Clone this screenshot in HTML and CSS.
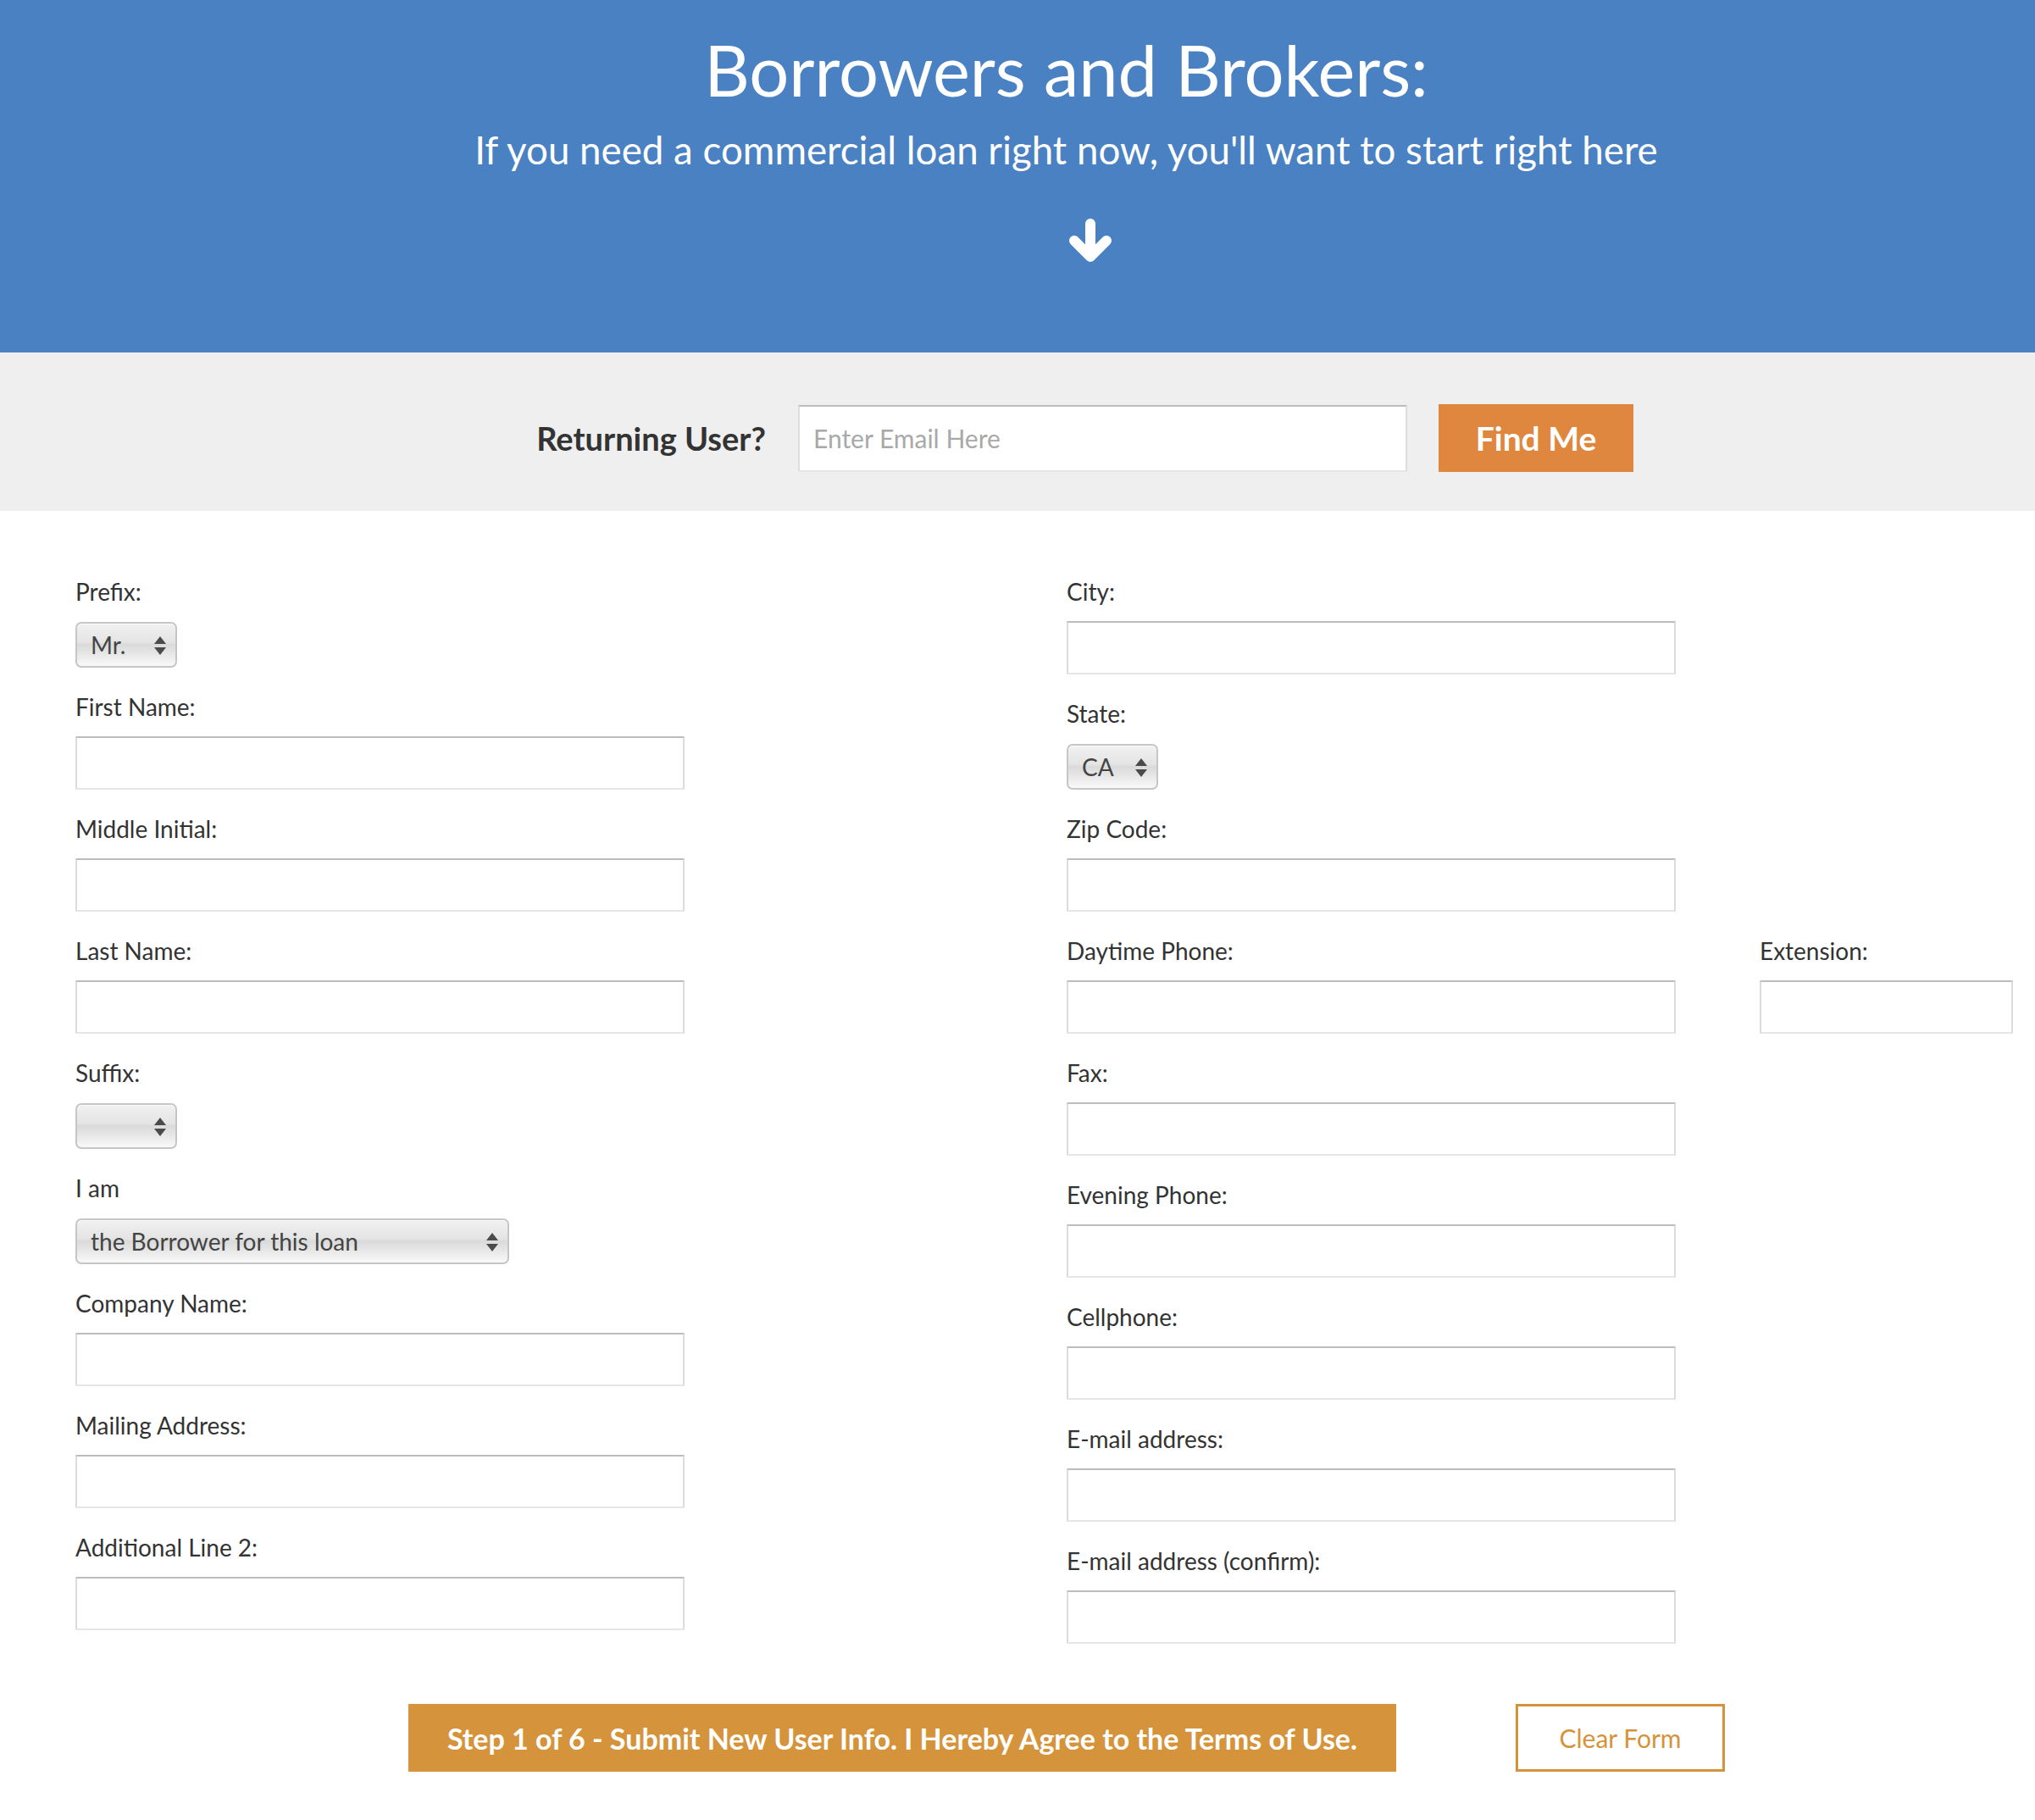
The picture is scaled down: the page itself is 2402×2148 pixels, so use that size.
FILE: index.html
```html
<!DOCTYPE html>
<html lang="en">
<head>
<meta charset="utf-8">
<title>Borrowers and Brokers</title>
<link rel="stylesheet" href="styles.css">
</head>
<body>
<header class="hero">
  <h1 class="hero-title">Borrowers and Brokers:</h1>
  <p class="hero-sub">If you need a commercial loan right now, you'll want to start right here</p>
  <div class="hero-arrow">
    <svg width="52" height="52" viewBox="0 0 52 52" aria-hidden="true">
      <g fill="none" stroke="#fff" stroke-width="12" stroke-linecap="round" stroke-linejoin="round">
        <line x1="26" y1="6" x2="26" y2="42"/>
        <polyline points="7,26 26,45 45,26"/>
      </g>
    </svg>
  </div>
</header>

<section class="returning">
  <label class="returning-label" for="findEmail">Returning User?</label>
  <input class="returning-input" id="findEmail" type="text" placeholder="Enter Email Here">
  <button class="btn-find" type="button">Find Me</button>
</section>

<form class="form">
  <div class="col col-left">
    <div class="group group-select">
      <label class="lbl">Prefix:</label>
      <div class="sel sel-prefix"><select><option>Mr.</option></select><svg class="sel-arrows" width="14" height="22" viewBox="0 0 14 22"><polygon points="0,9 7,0 14,9"/><polygon points="0,13 14,13 7,22"/></svg></div>
    </div>
    <div class="group"><label class="lbl">First Name:</label><input class="txt" type="text"></div>
    <div class="group"><label class="lbl">Middle Initial:</label><input class="txt" type="text"></div>
    <div class="group"><label class="lbl">Last Name:</label><input class="txt" type="text"></div>
    <div class="group group-select">
      <label class="lbl">Suffix:</label>
      <div class="sel sel-suffix"><select><option></option></select><svg class="sel-arrows" width="14" height="22" viewBox="0 0 14 22"><polygon points="0,9 7,0 14,9"/><polygon points="0,13 14,13 7,22"/></svg></div>
    </div>
    <div class="group group-select">
      <label class="lbl">I am</label>
      <div class="sel sel-iam"><select><option>the Borrower for this loan</option></select><svg class="sel-arrows" width="14" height="22" viewBox="0 0 14 22"><polygon points="0,9 7,0 14,9"/><polygon points="0,13 14,13 7,22"/></svg></div>
    </div>
    <div class="group"><label class="lbl">Company Name:</label><input class="txt" type="text"></div>
    <div class="group"><label class="lbl">Mailing Address:</label><input class="txt" type="text"></div>
    <div class="group"><label class="lbl">Additional Line 2:</label><input class="txt" type="text"></div>
  </div>

  <div class="col col-right">
    <div class="group"><label class="lbl">City:</label><input class="txt" type="text"></div>
    <div class="group group-select">
      <label class="lbl">State:</label>
      <div class="sel sel-state"><select><option>CA</option></select><svg class="sel-arrows" width="14" height="22" viewBox="0 0 14 22"><polygon points="0,9 7,0 14,9"/><polygon points="0,13 14,13 7,22"/></svg></div>
    </div>
    <div class="group"><label class="lbl">Zip Code:</label><input class="txt" type="text"></div>
    <div class="pair">
      <div class="group"><label class="lbl">Daytime Phone:</label><input class="txt" type="text"></div>
      <div class="group"><label class="lbl">Extension:</label><input class="txt txt-ext" type="text"></div>
    </div>
    <div class="group"><label class="lbl">Fax:</label><input class="txt" type="text"></div>
    <div class="group"><label class="lbl">Evening Phone:</label><input class="txt" type="text"></div>
    <div class="group"><label class="lbl">Cellphone:</label><input class="txt" type="text"></div>
    <div class="group"><label class="lbl">E-mail address:</label><input class="txt" type="text"></div>
    <div class="group"><label class="lbl">E-mail address (confirm):</label><input class="txt" type="text"></div>
  </div>
</form>

<div class="actions">
  <button class="btn-submit" type="button">Step 1 of 6 - Submit New User Info. I Hereby Agree to the Terms of Use.</button>
  <button class="btn-clear" type="button">Clear Form</button>
</div>
</body>
</html>
```

FILE: styles.css
```css
* { box-sizing: border-box; }

html, body {
  margin: 0;
  padding: 0;
  background: #ffffff;
  font-family: "Lato", "Open Sans", "Liberation Sans", sans-serif;
  color: #333333;
}

/* ---------- hero ---------- */
.hero {
  background: #4a81c2;
  color: #ffffff;
  text-align: center;
  padding: 33px 0 106px 115px;
}

.hero-title {
  margin: 0;
  font-size: 83px;
  line-height: 98px;
  font-weight: 400;
}

.hero-sub {
  margin: 19px 0 0;
  font-size: 45.7px;
  line-height: 54px;
  font-weight: 400;
}

.hero-arrow {
  margin-top: 54px;
  height: 52px;
  display: flex;
  justify-content: center;
  padding-left: 57px;
}

.hero-arrow svg { display: block; }

/* ---------- returning user ---------- */
.returning {
  background: #efefef;
  display: flex;
  align-items: center;
  justify-content: center;
  padding: 61px 0 46px 157px;
  gap: 38px;
}

.returning-label {
  width: 273px;
  text-align: right;
  white-space: nowrap;
  font-size: 38px;
  font-weight: 700;
  color: #333333;
}

.returning-input {
  width: 719px;
  height: 79px;
  margin-right: -1px;
  border: 2px solid #dddddd;
  border-top-color: #bdbdbd;
  border-bottom-color: #e6e6e6;
  background: #ffffff;
  padding: 0 16px;
  font-family: inherit;
  font-size: 30px;
  color: #333333;
  outline: none;
}

.returning-input::placeholder { color: #a9a9a9; }

.btn-find {
  width: 230px;
  height: 80px;
  border: 0;
  background: #e0873f;
  color: #ffffff;
  font-family: inherit;
  font-size: 39px;
  font-weight: 700;
  padding: 0;
  cursor: pointer;
}

/* ---------- form ---------- */
.form {
  display: flex;
  align-items: flex-start;
  padding: 78px 0 0 89px;
  gap: 451px;
}

.col {
  display: flex;
  flex-direction: column;
}

.col-left { width: 719px; }
.col-right { width: 1119px; }

.group {
  display: flex;
  flex-direction: column;
  align-items: flex-start;
  margin-bottom: 29px;
}

.lbl {
  display: block;
  font-size: 28px;
  line-height: 34px;
  margin-bottom: 18px;
  color: #333333;
  white-space: nowrap;
}

.txt {
  width: 719px;
  height: 63px;
  border: 2px solid #dcdcdc;
  border-top-color: #bdbdbd;
  border-bottom-color: #e6e6e6;
  background: #ffffff;
  padding: 0 14px;
  font-family: inherit;
  font-size: 28px;
  outline: none;
}

.txt-ext { width: 299px; }

.pair {
  display: flex;
  gap: 99px;
}

/* custom select look */
.sel {
  position: relative;
  height: 54px;
  border: 2px solid #c6c6c6;
  border-radius: 7px;
  background: linear-gradient(#f1f1f1 0%, #e4e4e4 44%, #dadada 50%, #e6e6e6 70%, #f9f9f9 100%);
  box-shadow: inset 0 1px 0 rgba(255,255,255,0.8);
}

.group-select .lbl { margin-bottom: 19px; }
.group-select { margin-bottom: 29px; }

.sel select {
  -webkit-appearance: none;
  appearance: none;
  width: 100%;
  height: 100%;
  border: 0;
  background: transparent;
  padding: 0 0 0 16px;
  font-family: inherit;
  font-size: 28px;
  color: #444444;
  outline: none;
}

.sel-arrows {
  position: absolute;
  right: 11px;
  top: 50%;
  margin-top: -10px;
  fill: #4a4a4a;
  pointer-events: none;
}

.sel-prefix { width: 120px; }
.sel-suffix { width: 120px; }
.sel-iam { width: 512px; }
.sel-state { width: 108px; }

/* ---------- actions ---------- */
.actions {
  display: flex;
  justify-content: center;
  align-items: center;
  gap: 141px;
  padding: 42px 0 58px 116px;
}

.btn-submit {
  width: 1166px;
  height: 80px;
  border: 0;
  background: #d5943b;
  color: #ffffff;
  font-family: inherit;
  font-size: 34px;
  font-weight: 700;
  padding: 0;
  cursor: pointer;
}

.btn-clear {
  width: 247px;
  height: 80px;
  border: 3px solid #d5943b;
  background: #ffffff;
  color: #d5943b;
  font-family: inherit;
  font-size: 30px;
  font-weight: 400;
  padding: 0;
  cursor: pointer;
}
```
